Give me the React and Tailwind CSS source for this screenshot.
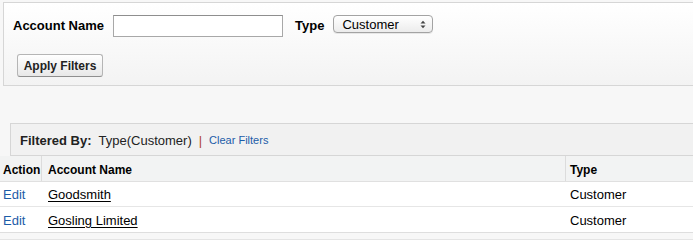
import React from "react";

export default function App() {
  return (
    <div className="w-full h-[240px] overflow-hidden bg-[#f7f7f7] text-black" style={{ fontFamily: '"Liberation Sans", Arial, sans-serif' }}>
      {/* Filter panel */}
      <div className="mt-[2px] ml-[3px] h-[84px] border-t border-l border-b border-[#d6d6d6] bg-gradient-to-b from-white to-[#f3f3f3] pl-[9px] pt-[12px]">
        <div className="flex items-center h-[22px]">
          <span className="text-[13px] font-bold">Account Name</span>
          <input type="text" className="ml-[9px] w-[170px] h-[22px] border border-[#a8a8a8] border-t-[#8e8e8e] bg-white outline-none" />
          <span className="ml-[12px] text-[13px] font-bold">Type</span>
          <div className="ml-[9px] -mt-[4px] w-[100px] h-[18px] rounded-[4px] border border-[#a3a3a3] bg-gradient-to-b from-white to-[#ececec] shadow-[0_1px_0_rgba(0,0,0,0.08)] flex items-center justify-between pl-[8px] pr-[6px]">
            <span className="text-[13px] leading-none">Customer</span>
            <svg width="6" height="9" viewBox="0 0 6 9">
              <path d="M0.5 3.5 L3 0.8 L5.5 3.5 Z" fill="#444" />
              <path d="M0.5 5.5 L3 8.2 L5.5 5.5 Z" fill="#444" />
            </svg>
          </div>
        </div>
        <button className="mt-[17px] ml-[4px] w-[86px] h-[23px] rounded-[3px] border border-[#b5b5b5] border-b-[#8f8f8f] bg-gradient-to-b from-white to-[#e8e8e8] text-[12px] font-bold text-[#222] flex items-center justify-center">
          Apply Filters
        </button>
      </div>

      {/* Filtered by bar */}
      <div className="mt-[37px] ml-[10px] h-[33px] border-t border-l border-b border-[#d6d6d6] bg-[#f1f1f1] flex items-center pl-[9px] pt-[2px]">
        <span className="text-[13px] font-bold text-[#222]">Filtered By:</span>
        <span className="ml-[7px] text-[13px] text-[#222]">Type(Customer)</span>
        <span className="ml-[7px] text-[13px] text-[#b0442c]">|</span>
        <span className="ml-[7px] text-[11px] text-[#1c5ca8]">Clear Filters</span>
      </div>

      {/* Table */}
      <div className="bg-white border-b border-[#dedede]">
        <div className="flex h-[26px] bg-[#f2f3f3] border-b border-[#e0e0e0] text-[12px] font-bold pt-[2px]">
          <div className="w-[42px] border-r border-[#dcdcdc] -mt-[2px] pt-[2px] flex items-center pl-[3px]">Action</div>
          <div className="w-[523px] flex items-center pl-[6px]">Account Name</div>
          <div className="flex-1 border-l border-[#dcdcdc] -mt-[2px] pt-[2px] flex items-center pl-[4px]">Type</div>
        </div>
        {["Goodsmith", "Gosling Limited"].map((name, i) => (
          <div key={name} className={"flex h-[25px] text-[13px] pt-[2px] " + (i === 0 ? "border-b border-[#e6e6e6]" : "")}>
            <div className="w-[42px] flex items-center pl-[3px] text-[#1c5ca8]">Edit</div>
            <div className="w-[523px] flex items-center pl-[6px]"><span className="underline underline-offset-2">{name}</span></div>
            <div className="flex-1 flex items-center pl-[5px]">Customer</div>
          </div>
        ))}
      </div>
      <div className="mt-[6px] border-t border-[#e4e4e4]"></div>
    </div>
  );
}
